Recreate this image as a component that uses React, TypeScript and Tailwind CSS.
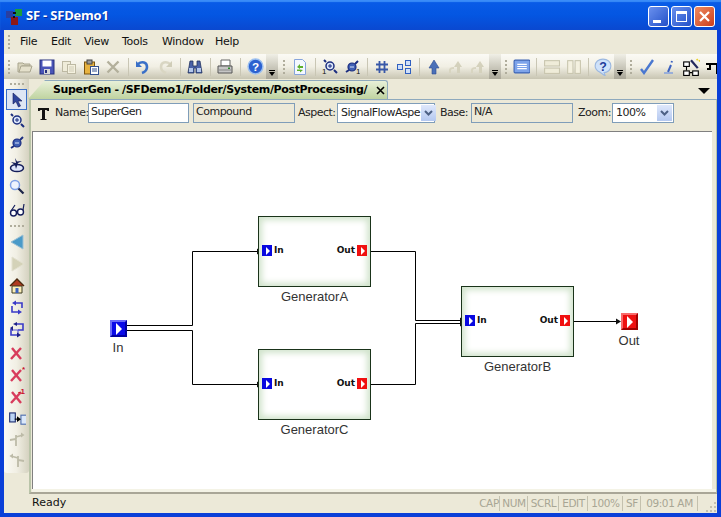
import type { ReactNode } from 'react';

const ui = "font-['DejaVu_Sans',sans-serif]";

function Ico({ children, size = 16 }: { children: ReactNode; size?: number }) {
    return (
        <svg width={size} height={size} viewBox="0 0 16 16" fill="none">
            {children}
        </svg>
    );
}

function Btn({ children }: { children: ReactNode }) {
    return <div className="flex h-[24px] w-[22px] shrink-0 items-center justify-center">{children}</div>;
}

function Sep() {
    return (
        <div className="flex h-[24px] w-[8px] shrink-0 justify-center py-[3px]">
            <div className="w-px bg-[#c9c6b4]" />
        </div>
    );
}

function Grip({ w }: { w: string }) {
    return (
        <div className={`flex h-[24px] shrink-0 flex-col items-center justify-center gap-[2px] ${w}`}>
            <div className="h-[2px] w-[2px] bg-[#b0ad9c]" />
            <div className="h-[2px] w-[2px] bg-[#b0ad9c]" />
            <div className="h-[2px] w-[2px] bg-[#b0ad9c]" />
            <div className="h-[2px] w-[2px] bg-[#b0ad9c]" />
        </div>
    );
}

function Chevron() {
    return (
        <div className="flex h-[25px] w-[12px] shrink-0 flex-col items-center justify-end bg-gradient-to-b from-[#f0efe6] to-[#a9a697] pb-[3px]">
            <div className="mb-px h-px w-[6px] bg-black" />
            <div className="h-0 w-0 border-x-[3px] border-t-[4px] border-x-transparent border-t-black" />
        </div>
    );
}

const Open = () => (
    <Ico>
        <path d="M1 4h5l1 1h6v2H5L3 13H1z" fill="#d8d4bd" stroke="#a8a48e" />
        <path d="M4 7h11l-2 6H2z" fill="#e4e0cb" stroke="#a8a48e" />
    </Ico>
);
const Save = () => (
    <Ico>
        <rect x="1" y="1" width="14" height="14" fill="#4a55b8" stroke="#26307e" />
        <rect x="3.5" y="1.5" width="9" height="6" fill="#fff" />
        <rect x="5" y="10" width="6" height="5" fill="#d8d8d8" />
        <rect x="6" y="11" width="2" height="3" fill="#26307e" />
    </Ico>
);
const Copy = () => (
    <Ico>
        <rect x="1.5" y="2.5" width="8" height="10" fill="#efecd9" stroke="#bdb9a3" />
        <rect x="6.5" y="5.5" width="8" height="9" fill="#f4f1df" stroke="#bdb9a3" />
        <path d="M8 8h5M8 10h5M8 12h5" stroke="#cfcbb6" />
    </Ico>
);
const Paste = () => (
    <Ico>
        <rect x="1.5" y="3" width="10" height="12" fill="#e8b340" stroke="#7a5410" />
        <rect x="4" y="1" width="5" height="4" fill="#9a9a9a" stroke="#444" />
        <rect x="7.5" y="7.5" width="8" height="8" fill="#fff" stroke="#34508e" />
        <path d="M9 10h5M9 12h5" stroke="#34508e" />
    </Ico>
);
const Cut = () => (
    <Ico>
        <path d="M2.5 2.5l11 11M13.5 2.5l-11 11" stroke="#b3b09c" strokeWidth="2.4" />
    </Ico>
);
const Undo = () => (
    <Ico>
        <path d="M3 5c4-3 9-2 9 3 0 3-2 5-5 6" stroke="#3a70c8" strokeWidth="2.6" />
        <path d="M1 2v6h6z" fill="#3a70c8" />
    </Ico>
);
const Redo = () => (
    <Ico>
        <path d="M13 5C9 2 4 3 4 8c0 3 2 5 5 6" stroke="#d9d6c3" strokeWidth="2.6" />
        <path d="M15 2v6H9z" fill="#d0cdb8" />
    </Ico>
);
const Binoc = () => (
    <Ico>
        <path d="M3 2h3v5h4V2h3l2 12H9V9H7v5H1z" fill="#4a62a8" stroke="#22325e" strokeWidth="0.8" />
        <rect x="2" y="9" width="4" height="4" fill="#b4c8ec" />
        <rect x="10" y="9" width="4" height="4" fill="#b4c8ec" />
    </Ico>
);
const Print = () => (
    <Ico>
        <path d="M4 1h9v6H4z" fill="#fff" stroke="#666" />
        <path d="M1 7h14v7H1z" fill="#c6c6c6" stroke="#555" />
        <path d="M2 11h12" stroke="#888" />
        <rect x="11" y="8.5" width="2" height="1.5" fill="#2a8a2a" />
    </Ico>
);
const Help = () => (
    <Ico size={17}>
        <circle cx="8" cy="8" r="7" fill="#2c62d0" stroke="#9cc0f0" strokeWidth="1.4" />
        <text x="8" y="12" textAnchor="middle" fontSize="11" fontWeight="bold" fill="#fff" fontFamily="Liberation Sans">?</text>
    </Ico>
);
const Refresh = () => (
    <Ico>
        <path d="M2.5 .5h8l3 3v12h-11z" fill="#f4f8ff" stroke="#86a4dc" />
        <path d="M5 8l3-3v2h3v2H8v1zM11 11l-3 2.5V12H5v-1.5h3" fill="#5cb02c" />
    </Ico>
);
const ZoomIn = ({ n }: { n?: boolean }) => (
    <Ico>
        {n && <text x="0" y="15" fontSize="8" fill="#111" fontFamily="Liberation Sans">1</text>}
        <path d="M2 1l2 2M12 11l3 3" stroke="#1c2e80" strokeWidth="2" />
        <circle cx="8" cy="7" r="4" fill="#dbe6fa" stroke="#1c2e80" strokeWidth="1.5" />
        <path d="M6 7h4M8 5v4" stroke="#1c2e80" />
    </Ico>
);
const ZoomOut = ({ n }: { n?: boolean }) => (
    <Ico>
        {n && <text x="12" y="15" fontSize="8" fill="#111" fontFamily="Liberation Sans">1</text>}
        <path d="M2 13l3-2M11 5l3-3" stroke="#1c2e80" strokeWidth="2" />
        <circle cx="8" cy="8" r="4" fill="#3f5fb4" stroke="#1c2e80" strokeWidth="1.2" />
        <path d="M6 8h4" stroke="#dbe6fa" />
    </Ico>
);
const Hash = () => (
    <Ico>
        <path d="M5.5 2v12M10.5 2v12M2 5.5h12M2 10.5h12" stroke="#3858a8" strokeWidth="1.8" />
    </Ico>
);
const Boxes = () => (
    <Ico>
        <rect x="1.5" y="5.5" width="5" height="5" fill="#cfe0fa" stroke="#3060c0" />
        <rect x="9.5" y="1.5" width="5" height="5" fill="#cfe0fa" stroke="#3060c0" />
        <rect x="9.5" y="9.5" width="5" height="5" fill="#cfe0fa" stroke="#3060c0" />
    </Ico>
);
const Up = () => (
    <Ico>
        <path d="M8 1l5 8H10v6H6V9H3z" fill="#4a70b8" stroke="#2c4c90" strokeWidth="0.6" />
    </Ico>
);
const UpOff = () => (
    <Ico>
        <path d="M10 2l4 6h-2v6H9V8H6z" fill="#d4d1bc" />
        <path d="M1 14v-3c0-2 2-3 5-3v2c-2 0-3 .5-3 1v3z" fill="#d8d5c1" />
    </Ico>
);
const Panel = () => (
    <Ico size={17}>
        <rect x="1" y="2" width="15" height="12" rx="1" fill="#7ea4ea" stroke="#3a62b4" />
        <path d="M4 6h9M4 8h9M4 10h9" stroke="#fff" />
    </Ico>
);
const SplitH = () => (
    <Ico size={17}>
        <rect x="1.5" y="2.5" width="14" height="5" fill="#efecd9" stroke="#c8c5ae" />
        <rect x="1.5" y="9.5" width="14" height="5" fill="#efecd9" stroke="#c8c5ae" />
    </Ico>
);
const SplitV = () => (
    <Ico size={17}>
        <rect x="2.5" y="2.5" width="5" height="12" fill="#f4f1e0" stroke="#c8c5ae" />
        <rect x="9.5" y="2.5" width="5" height="12" fill="#f4f1e0" stroke="#c8c5ae" />
    </Ico>
);
const Bubble = () => (
    <Ico size={18}>
        <path d="M8 1c4 0 7 2.500 7 6s-3 6-6 6l1 3-5-3.500C2.500 11 1 9.500 1 7c0-3.500 3-6 7-6z" fill="#cfe2fa" stroke="#9cb8e0" />
        <text x="8" y="11.500" textAnchor="middle" fontSize="11" fontWeight="bold" fill="#1c3c9c" fontFamily="Liberation Sans">?</text>
    </Ico>
);
const Check = () => (
    <Ico>
        <path d="M2 10l3 4 9-13" stroke="#4a78d0" strokeWidth="2.4" />
    </Ico>
);
const Slant = () => (
    <Ico>
        <path d="M10 6L7 13M11 2l-.5 1.500" stroke="#3c62c0" strokeWidth="2" />
        <path d="M3 14h9" stroke="#7c9ce0" strokeWidth="1.400" />
    </Ico>
);
const Wizard = () => (
    <Ico size={18}>
        <rect x="1.500" y="3.500" width="5" height="4" fill="#fff" stroke="#000" />
        <rect x="1.500" y="11.500" width="5" height="4" fill="#fff" stroke="#000" />
        <rect x="9.500" y="11.500" width="5" height="4" fill="#fff" stroke="#000" />
        <path d="M4 8v3M7 13h2" stroke="#000" />
        <path d="M8 2l6 7" stroke="#22285c" strokeWidth="2" />
        <path d="M13 1l1 1M15 3l1-1" stroke="#e8d020" strokeWidth="1.500" />
    </Ico>
);
const Cropped = () => (
    <Ico>
        <path d="M5 5h7v10M1 5h4v5H2" stroke="#000" strokeWidth="2" />
    </Ico>
);

const Pointer = () => (
    <Ico>
        <path d="M4 1v11l3-2.500L9.500 15l2-1L9 9h4z" fill="#30459c" stroke="#141d5a" strokeWidth="0.6" />
    </Ico>
);
const Pan = () => (
    <Ico>
        <ellipse cx="8" cy="11" rx="6.500" ry="3.600" fill="#dfe6fa" stroke="#141d5a" strokeWidth="1.500" />
        <path d="M6 1l1 5-5-1 4 3 1 4 2-6 4-2-5 .5z" fill="#141d5a" />
    </Ico>
);
const Magnify = () => (
    <Ico>
        <circle cx="6" cy="6" r="4.500" fill="#eef3fd" stroke="#7ea0e6" strokeWidth="1.500" />
        <path d="M9.500 9.500l5 5" stroke="#1c2448" strokeWidth="2.200" />
    </Ico>
);
const Glasses = () => (
    <Ico>
        <circle cx="4.500" cy="11" r="3" fill="#fff" stroke="#141d5a" strokeWidth="1.400" />
        <circle cx="11.500" cy="10" r="3" fill="#fff" stroke="#141d5a" strokeWidth="1.400" />
        <path d="M7 10l2-1M2 9l4-6M14 8l1-6" stroke="#141d5a" strokeWidth="1.200" />
    </Ico>
);
const TriLeft = () => (
    <Ico>
        <path d="M14 1v14L2 8z" fill="#4a9ac8" stroke="#9cc0d4" />
    </Ico>
);
const TriRight = () => (
    <Ico>
        <path d="M3 1v14l12-7z" fill="#d4d2b8" stroke="#e2e0cf" />
    </Ico>
);
const Home = () => (
    <Ico>
        <path d="M1 8l7-7 7 7" fill="#b03a20" stroke="#4a2a10" strokeWidth="1.400" />
        <path d="M3 8h10v7H3z" fill="#fbeeb8" stroke="#3a3a20" />
        <rect x="6.500" y="10" width="3" height="5" fill="#3c62c0" />
    </Ico>
);
const Loop = () => (
    <Ico>
        <path d="M6 3h7v5M10 12H3V6" stroke="#3a3ac8" strokeWidth="1.600" />
        <path d="M7 .5L3 3l4 2.500zM9 9.500l4 2.500-4 2.500z" fill="#3a3ac8" />
    </Ico>
);
const LoopTwo = () => (
    <Ico>
        <path d="M7 2h7v6H9M2 7v6h7" stroke="#3a3ac8" strokeWidth="1.600" />
        <path d="M2 8h7v5" stroke="#5a5ad8" strokeWidth="1.200" />
        <path d="M8 0L4 2l4 2zM8 10.500l4 2.500-4 2.500zM1 6l3-2v5z" fill="#1e2088" />
    </Ico>
);
const RedX = ({ mark }: { mark?: string }) => (
    <Ico>
        <path d="M2 15L12 4M3 4l9 11" stroke="#d83c5c" strokeWidth="2.400" />
        {mark && <text x="16" y="6" textAnchor="end" fontSize="8" fontWeight="bold" fill="#c8102c" fontFamily="Liberation Sans">{mark}</text>}
    </Ico>
);
const Connect = () => (
    <Ico size={18}>
        <rect x="1.500" y="3.500" width="5" height="8" fill="#bcd4f4" stroke="#1c2c70" />
        <rect x="11.500" y="5.500" width="5" height="8" fill="#dbe8fa" stroke="#5070b0" />
        <path d="M6 9h3" stroke="#000" />
        <path d="M8 6.500L11.500 9 8 11.500z" fill="#000" />
    </Ico>
);
const RouteOff = ({ flip }: { flip?: boolean }) => (
    <Ico>
        <g transform={flip ? 'translate(16,0) scale(-1,1)' : undefined}>
            <path d="M1 9l6-1V4M7 8v7M7 6l7-2" stroke="#bdbba8" strokeWidth="1.800" />
            <path d="M12 1.500L15.500 4 12 6.500z" fill="#bdbba8" />
        </g>
    </Ico>
);

function PortIcon({ color, label, dir }: { color: 'blue' | 'red'; label: string; dir: 'in' | 'out' }) {
    return (
        <div className={`flex items-center gap-[2px] text-[9px] leading-[11px] font-bold text-[#111] font-['DejaVu_Sans',sans-serif] ${dir === 'out' ? 'flex-row' : 'flex-row-reverse'}`}>
            <span>{label}</span>
            <div className={`flex h-[11px] w-[10px] items-center justify-center ${color === 'blue' ? 'bg-[#0808e0]' : 'bg-[#f01010]'}`}>
                <div className="ml-[2px] h-0 w-0 border-y-[4px] border-l-[4px] border-y-transparent border-l-white" />
            </div>
        </div>
    );
}

function Generator({ name, left, top }: { name: string; left: string; top: string }) {
    return (
        <div className={`absolute w-[113px] ${left} ${top}`}>
            <div className="flex h-[71px] items-center justify-between border border-[#1a331a] bg-white px-[3px] pb-[2px] shadow-[inset_0_0_6px_3px_#d0e3cb]">
                <PortIcon color="blue" label="In" dir="in" />
                <PortIcon color="red" label="Out" dir="out" />
            </div>
            <div className="mt-[2px] text-center font-['Liberation_Sans',sans-serif] text-[13px] leading-[15px] text-[#333]">{name}</div>
        </div>
    );
}

function TopPort({ color, label, left, top }: { color: 'blue' | 'red'; label: string; left: string; top: string }) {
    const face = color === 'blue'
        ? 'border-t-[#6a6af8] border-l-[#6a6af8] border-r-[#0000a0] border-b-[#0000a0] bg-[#0a0ae8]'
        : 'border-t-[#f86a6a] border-l-[#f86a6a] border-r-[#a00000] border-b-[#a00000] bg-[#ee1010]';
    return (
        <div className={`absolute flex w-[30px] flex-col items-center ${left} ${top}`}>
            <div className={`flex h-[17px] w-[17px] items-center justify-center border-2 ${face}`}>
                <div className="ml-[2px] h-0 w-0 border-y-[6px] border-l-[6px] border-y-transparent border-l-white" />
            </div>
            <div className="mt-[3px] font-['Liberation_Sans',sans-serif] text-[13px] leading-[15px] text-[#333]">{label}</div>
        </div>
    );
}

function Wires() {
    // drawn in canvas coordinates
    const ox = 33;
    const oy = 132;
    const lines = [
        'M127 325.500H192.500V251.500H258',
        'M127 330.500H192.500V384.500H258',
        'M367 251.500H415.500V320.500H462',
        'M367 384.500H415.500V323.500H462',
        'M570 321.500H619',
    ];
    const heads = [
        [262, 251.5],
        [262, 384.5],
        [465, 320.5],
        [465, 323.5],
        [621, 321.5],
    ];
    return (
        <svg className="absolute inset-0" width="680" height="358" viewBox={`${ox} ${oy} 680 358`} fill="none">
            {lines.map((d) => (
                <path key={d} d={d} stroke="#000" strokeWidth="1" />
            ))}
            {heads.map(([x, y]) => (
                <path key={`${x}-${y}`} d={`M${x - 5} ${y - 3}L${x} ${y}L${x - 5} ${y + 3}z`} fill="#111" />
            ))}
        </svg>
    );
}

function Field({ w, value, readonly }: { w: string; value: string; readonly?: boolean }) {
    return (
        <div className={`flex h-[20px] shrink-0 items-center border border-[#7f9db9] px-[2px] pb-[2px] ${w} ${readonly ? 'bg-[#ece9d8]' : 'bg-white'}`}>
            {value}
        </div>
    );
}

function Combo({ w, value }: { w: string; value: string }) {
    return (
        <div className={`flex h-[20px] shrink-0 items-center justify-between border border-[#7f9db9] bg-white pl-[3px] ${w}`}>
            <span className="whitespace-nowrap">{value}</span>
            <div className="m-px flex h-[16px] w-[15px] shrink-0 items-center justify-center bg-gradient-to-b from-[#dfe8fb] to-[#b4c8f0]">
                <svg width="9" height="6" viewBox="0 0 9 6" fill="none">
                    <path d="M1 1l3.500 3.500L8 1" stroke="#4d6185" strokeWidth="2" />
                </svg>
            </div>
        </div>
    );
}

function Status({ w, children }: { w: string; children: string }) {
    return <div className={`shrink-0 border-r border-[#c4c1ae] pl-[1px] text-center whitespace-nowrap ${w}`}>{children}</div>;
}

export default function App() {
    return (
        <div className={`flex h-[517px] w-[721px] flex-col overflow-hidden bg-[#0a3fd8] ${ui}`}>
            {/* title bar */}
            <div className="flex h-[30px] shrink-0 items-center bg-gradient-to-b from-[#0a5ce8] via-[#0456e2] to-[#0a48d0] pt-[2px] pr-[6px] pl-[6px] shadow-[inset_0_2px_1px_#3a8cf8]">
                <svg width="17" height="17" viewBox="0 0 17 17">
                    <rect x="0" y="3" width="7" height="7" fill="#2a3fa0" />
                    <rect x="9" y="1" width="7" height="7" fill="#1c9c3c" />
                    <rect x="5" y="9" width="7" height="8" fill="#8c1818" />
                    <path d="M7 5l3 0M8 8l0 2" stroke="#111" strokeWidth="2" />
                </svg>
                <span className="ml-[3px] font-['Open_Sans',sans-serif] text-[13px] font-bold tracking-[-0.2px] text-white [text-shadow:1px_1px_0_#0a2a9c]">SF - SFDemo1</span>
                <div className="ml-auto flex gap-[2px]">
                    <div className="flex h-[21px] w-[21px] items-end rounded-[3px] border border-white bg-gradient-to-br from-[#6a90ee] to-[#2450c8] pb-[3px] pl-[4px]">
                        <div className="h-[3px] w-[8px] bg-white" />
                    </div>
                    <div className="flex h-[21px] w-[21px] items-center justify-center rounded-[3px] border border-white bg-gradient-to-br from-[#6a90ee] to-[#2450c8]">
                        <div className="h-[11px] w-[11px] border border-t-[3px] border-white" />
                    </div>
                    <div className="flex h-[21px] w-[21px] items-center justify-center rounded-[3px] border border-white bg-gradient-to-br from-[#ee8a60] to-[#cc3c18]">
                        <svg width="11" height="11" viewBox="0 0 11 11">
                            <path d="M1 1l9 9M10 1l-9 9" stroke="#fff" strokeWidth="2.200" />
                        </svg>
                    </div>
                </div>
            </div>

            <div className="mx-[4px] flex min-h-0 flex-1 flex-col bg-[#ece9d8]">
                {/* menu */}
                <div className="flex h-[24px] shrink-0 items-center text-[11px] text-[#111]">
                    <Grip w="w-[10px]" />
                    <div className="w-[6px]" />
                    {[
                        ['File', 'w-[31px]'],
                        ['Edit', 'w-[33px]'],
                        ['View', 'w-[38px]'],
                        ['Tools', 'w-[40px]'],
                        ['Window', 'w-[53px]'],
                        ['Help', 'w-[40px]'],
                    ].map(([label, w]) => (
                        <span key={label} className={`tracking-[-0.3px] ${w}`}>{label}</span>
                    ))}
                </div>

                {/* main toolbar */}
                <div className="flex h-[25px] shrink-0 items-center overflow-hidden bg-gradient-to-b from-[#fbfaf5] via-[#f1efe4] to-[#c8c5b2]">
                    <Grip w="w-[10px]" />
                    <Btn><Open /></Btn>
                    <Btn><Save /></Btn>
                    <Btn><Copy /></Btn>
                    <Btn><Paste /></Btn>
                    <Btn><Cut /></Btn>
                    <Sep />
                    <Btn><Undo /></Btn>
                    <Btn><Redo /></Btn>
                    <Sep />
                    <Btn><Binoc /></Btn>
                    <Sep />
                    <Btn><Print /></Btn>
                    <Sep />
                    <Btn><Help /></Btn>
                    <Chevron />
                    <Grip w="w-[11px]" />
                    <Btn><Refresh /></Btn>
                    <Sep />
                    <Btn><ZoomIn n /></Btn>
                    <Btn><ZoomOut n /></Btn>
                    <Sep />
                    <Btn><Hash /></Btn>
                    <Btn><Boxes /></Btn>
                    <Sep />
                    <Btn><Up /></Btn>
                    <Btn><UpOff /></Btn>
                    <Btn><UpOff /></Btn>
                    <Chevron />
                    <Grip w="w-[9px]" />
                    <Btn><Panel /></Btn>
                    <Sep />
                    <Btn><SplitH /></Btn>
                    <Btn><SplitV /></Btn>
                    <Sep />
                    <Btn><Bubble /></Btn>
                    <Chevron />
                    <Grip w="w-[10px]" />
                    <Btn><Check /></Btn>
                    <Btn><Slant /></Btn>
                    <Btn><Wizard /></Btn>
                    <Btn><Cropped /></Btn>
                </div>

                <div className="flex min-h-0 flex-1">
                    {/* left toolbar */}
                    <div className="flex h-[394px] w-[25px] shrink-0 flex-col items-center rounded-b-[3px] bg-gradient-to-r from-[#fbfaf5] via-[#f1efe4] to-[#d5d2c0] pt-[4px]">
                        <div className="flex h-[6px] gap-[2px]">
                            <div className="h-[2px] w-[2px] bg-[#b0ad9c]" />
                            <div className="h-[2px] w-[2px] bg-[#b0ad9c]" />
                            <div className="h-[2px] w-[2px] bg-[#b0ad9c]" />
                            <div className="h-[2px] w-[2px] bg-[#b0ad9c]" />
                        </div>
                        <div className="flex h-[21px] w-[21px] items-center justify-center border border-[#3a6ec8] bg-[#dfe6f4]"><Pointer /></div>
                        <div className="flex h-[22px] items-center"><ZoomIn /></div>
                        <div className="flex h-[21px] items-center"><ZoomOut /></div>
                        <div className="flex h-[23px] items-center"><Pan /></div>
                        <div className="flex h-[22px] items-center"><Magnify /></div>
                        <div className="flex h-[23px] items-center"><Glasses /></div>
                        <div className="flex h-[10px] items-center gap-[2px]">
                            <div className="h-[2px] w-[2px] bg-[#b0ad9c]" />
                            <div className="h-[2px] w-[2px] bg-[#b0ad9c]" />
                            <div className="h-[2px] w-[2px] bg-[#b0ad9c]" />
                            <div className="h-[2px] w-[2px] bg-[#b0ad9c]" />
                        </div>
                        <div className="flex h-[22px] items-center"><TriLeft /></div>
                        <div className="flex h-[22px] items-center"><TriRight /></div>
                        <div className="flex h-[22px] items-center"><Home /></div>
                        <div className="flex h-[22px] items-center"><Loop /></div>
                        <div className="flex h-[22px] items-center"><LoopTwo /></div>
                        <div className="flex h-[22px] items-center"><RedX /></div>
                        <div className="flex h-[22px] items-center"><RedX mark="*" /></div>
                        <div className="flex h-[22px] items-center"><RedX mark="-1" /></div>
                        <div className="flex h-[21px] items-center"><Connect /></div>
                        <div className="flex h-[21px] items-center"><RouteOff /></div>
                        <div className="flex h-[22px] items-center"><RouteOff flip /></div>
                    </div>

                    {/* document */}
                    <div className="flex min-w-0 flex-1 flex-col">
                        <div className="flex h-[20px] shrink-0 items-end justify-between">
                            <div className="ml-[-1px] flex h-[19px] w-[360px] items-center rounded-tr-[3px] border-t border-r border-[#8ea9bd] bg-gradient-to-b from-[#e8f0d8] to-[#bfd3a0] pl-[25px] text-[11px] font-bold tracking-[-0.36px] whitespace-nowrap text-black [clip-path:polygon(17px_0,100%_0,100%_100%,0_100%)]">
                                <span>SuperGen - /SFDemo1/Folder/System/PostProcessing/</span>
                                <svg className="ml-[9px] shrink-0" width="9" height="9" viewBox="0 0 9 9">
                                    <path d="M1 1l7 7M8 1L1 8" stroke="#000" strokeWidth="1.600" />
                                </svg>
                            </div>
                            <div className="mr-[7px] mb-[5px] h-0 w-0 border-x-[6px] border-t-[6px] border-x-transparent border-t-black" />
                        </div>
                        <div className="flex min-h-0 flex-1 flex-col border-t border-r border-b-2 border-l-2 border-t-[#8ea9bd] border-r-[#b9c4a8] border-b-[#a9a697] border-l-[#b9c4a8] pl-[1px]">
                            <div className="flex h-[31px] shrink-0 items-center pb-[5px] text-[11px] tracking-[-0.5px] text-[#222]">
                                <svg className="ml-[5px]" width="13" height="13" viewBox="0 0 13 13">
                                    <path d="M1 1h11v3h-1.500l-1-1H8v9h1.500v1h-6v-1H5V3H3.500l-1 1H1z" fill="#111" />
                                </svg>
                                <span className="ml-[5px] w-[33px]">Name:</span>
                                <Field w="w-[101px]" value="SuperGen" />
                                <div className="w-[4px]" />
                                <Field w="w-[102px]" value="Compound" readonly />
                                <span className="ml-[3px] w-[39px]">Aspect:</span>
                                <Combo w="w-[98px]" value="SignalFlowAspe" />
                                <span className="ml-[5px] w-[31px]">Base:</span>
                                <Field w="w-[102px]" value="N/A" readonly />
                                <span className="ml-[5px] w-[34px]">Zoom:</span>
                                <Combo w="w-[62px]" value="100%" />
                            </div>
                            <div className="relative h-[358px] w-[680px] shrink-0 border-t border-l border-t-[#808080] border-l-[#808080] bg-white">
                                <Wires />
                                <TopPort color="blue" label="In" left="left-[70px]" top="top-[188px]" />
                                <TopPort color="red" label="Out" left="left-[581px]" top="top-[181px]" />
                                <Generator name="GeneratorA" left="left-[225px]" top="top-[84px]" />
                                <Generator name="GeneratorC" left="left-[225px]" top="top-[217px]" />
                                <Generator name="GeneratorB" left="left-[428px]" top="top-[154px]" />
                            </div>
                            <div className="min-h-0 flex-1 bg-[#f4f3e6]" />
                        </div>
                    </div>
                </div>

                {/* status bar */}
                <div className="flex h-[19px] shrink-0 items-center bg-[#ece9d8] text-[11px] text-[#111]">
                    <span className="pl-[28px]">Ready</span>
                    <div className="ml-auto flex items-center text-[10.5px] tracking-[-0.4px] text-[#a8a694]">
                        <Status w="w-[22px]">CAP</Status>
                        <Status w="w-[28px]">NUM</Status>
                        <Status w="w-[31px]">SCRL</Status>
                        <Status w="w-[29px]">EDIT</Status>
                        <Status w="w-[35px]">100%</Status>
                        <Status w="w-[18px]">SF</Status>
                        <Status w="w-[57px]">09:01 AM</Status>
                    </div>
                    <svg className="mt-[4px] ml-[7px]" width="12" height="12" viewBox="0 0 12 12">
                        <path d="M9 2h2v2H9zM5 6h2v2H5zM9 6h2v2H9zM1 10h2v2H1zM5 10h2v2H5zM9 10h2v2H9z" fill="#c4c1ae" />
                    </svg>
                </div>
            </div>
            <div className="h-[4px] shrink-0" />
        </div>
    );
}
